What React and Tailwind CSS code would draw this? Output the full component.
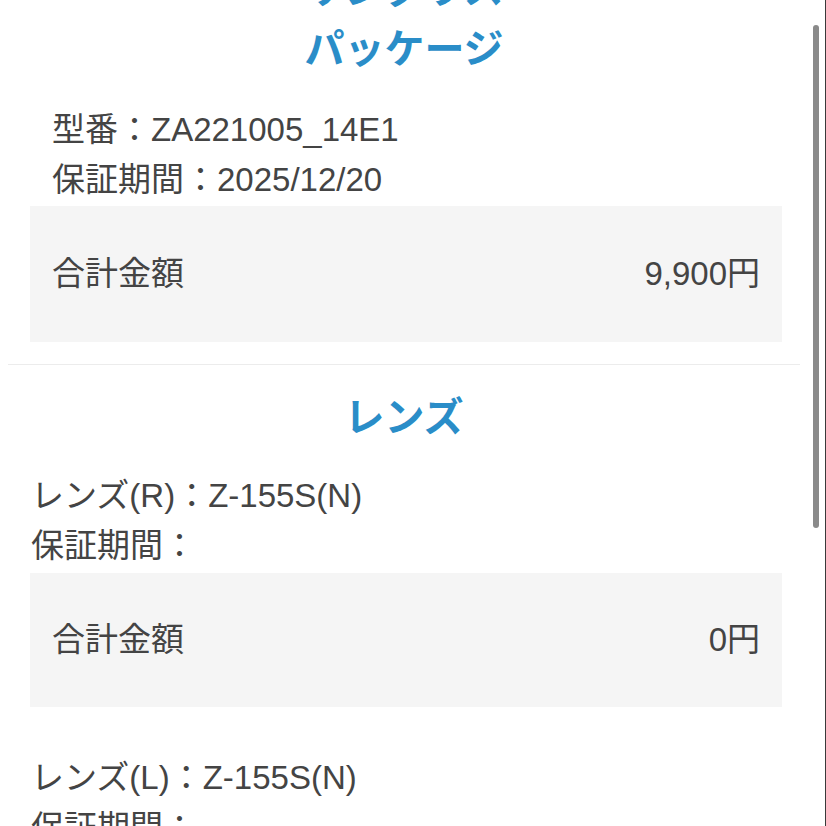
import React from 'react';

const font = "font-['Liberation_Sans','Noto_Sans_CJK_JP',sans-serif]";

const Total = ({ amount, height }) => (
  <div className={`ml-[30px] mr-[44px] ${height} bg-[#f5f5f5] flex items-center justify-between px-[22px] text-[33px] text-[#444]`}>
    <span>合計金額</span>
    <span>{amount}</span>
  </div>
);

const App = () => {
  return (
    <div className={`relative w-[826px] h-[826px] overflow-hidden bg-white ${font}`}>
      <div className="mt-[-41px]">
        <h2 className="text-center text-[40px] leading-[60px] font-bold text-[#2a8dc8] pr-[18px]">
          サングラス
          <br />
          パッケージ
        </h2>

        <div className="mt-[26px] pl-[52px] text-[33px] leading-[50px] text-[#444]">
          <p>型番：ZA221005_14E1</p>
          <p>保証期間：2025/12/20</p>
        </div>
        <div className="mt-px">
          <Total amount="9,900円" height="h-[136px]" />
        </div>

        <div className="mt-[22px] ml-[8px] mr-[26px] h-px bg-[#ececec]" />

        <h2 className="mt-[22px] text-center text-[40px] leading-[60px] font-bold text-[#2a8dc8] pr-[18px]">
          レンズ
        </h2>

        <div className="mt-[24px] pl-[31px] text-[33px] leading-[50px] text-[#444]">
          <p>レンズ(R)：Z-155S(N)</p>
          <p>保証期間：</p>
        </div>
        <div className="mt-[2px]">
          <Total amount="0円" height="h-[134px]" />
        </div>

        <div className="mt-[46px] pl-[31px] text-[33px] leading-[50px] text-[#444]">
          <p>レンズ(L)：Z-155S(N)</p>
          <p>保証期間：</p>
        </div>
      </div>

      {/* scrollbar */}
      <div className="absolute right-[7px] top-[25px] h-[503px] w-[6px] rounded-full bg-[#8a8a8a]" />
      <div className="absolute right-0 top-0 h-full w-px bg-[#3a3a3a]" />
    </div>
  );
};

export default App;
